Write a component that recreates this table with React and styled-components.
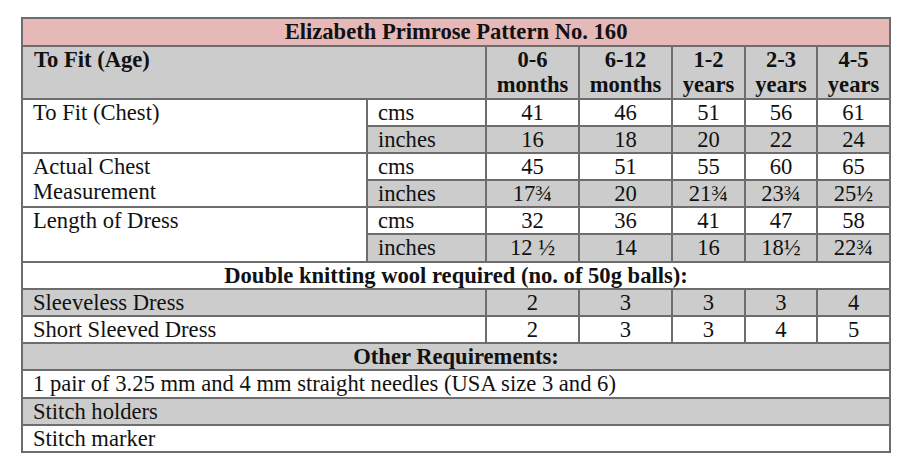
import React from 'react';
import styled, { createGlobalStyle } from 'styled-components';

const GlobalStyle = createGlobalStyle`
  html, body {
    margin: 0;
    padding: 0;
    background: #ffffff;
  }
  body {
    font-family: "Liberation Serif", "Times New Roman", serif;
    color: #111;
  }
`;

const Page = styled.div`
  padding: 17px 0 0 21px;
`;

const Table = styled.table`
  border-collapse: collapse;
  table-layout: fixed;
  width: 868px;
  font-size: 22.6px;
  line-height: 25px;
  border: 2px solid #6d6d6d;
  border-top: 1px solid #333;
`;

const Row = styled.tr`
  height: ${p => (p.$tall ? '53px' : '27.2px')};
  background: ${p => (p.$shade ? '#cccccc' : '#ffffff')};
`;

const TitleRow = styled.tr`
  height: 27.2px;
  background: #e6b8b7;
`;

const Cell = styled.td`
  border: 2px solid #6d6d6d;
  padding: 0 10px;
  vertical-align: top;
  text-align: ${p => (p.$center ? 'center' : 'left')};
  font-weight: ${p => (p.$bold ? 'bold' : 'normal')};
  background: ${p => (p.$shade ? '#cccccc' : 'transparent')};
  white-space: nowrap;
`;

const Head = styled.th`
  border: 2px solid #6d6d6d;
  padding: 0 4px;
  vertical-align: top;
  text-align: ${p => (p.$left ? 'left' : 'center')};
  padding-left: ${p => (p.$left ? '11px' : '4px')};
  font-weight: bold;
  font-size: 22.6px;
  line-height: 25.5px;
  white-space: nowrap;
`;

const ages = [
  ['0-6', 'months'],
  ['6-12', 'months'],
  ['1-2', 'years'],
  ['2-3', 'years'],
  ['4-5', 'years'],
];

const sizes = [
  { label: 'To Fit (Chest)', cms: ['41', '46', '51', '56', '61'], inches: ['16', '18', '20', '22', '24'] },
  { label: ['Actual Chest', 'Measurement'], cms: ['45', '51', '55', '60', '65'], inches: ['17¾', '20', '21¾', '23¾', '25½'] },
  { label: 'Length of Dress', cms: ['32', '36', '41', '47', '58'], inches: ['12 ½', '14', '16', '18½', '22¾'] },
];

const wool = [
  { label: 'Sleeveless Dress', values: ['2', '3', '3', '3', '4'], shade: true },
  { label: 'Short Sleeved Dress', values: ['2', '3', '3', '4', '5'], shade: false },
];

const other = [
  { label: '1 pair of 3.25 mm and 4 mm straight needles (USA size 3 and 6)', shade: false },
  { label: 'Stitch holders', shade: true },
  { label: 'Stitch marker', shade: false },
];

export default function App() {
  return (
    <Page>
      <GlobalStyle />
      <Table>
        <colgroup>
          <col style={{ width: 345 }} />
          <col style={{ width: 119 }} />
          <col style={{ width: 93 }} />
          <col style={{ width: 93 }} />
          <col style={{ width: 73 }} />
          <col style={{ width: 72 }} />
          <col style={{ width: 73 }} />
        </colgroup>
        <tbody>
          <TitleRow>
            <Head colSpan={7}>Elizabeth Primrose Pattern No. 160</Head>
          </TitleRow>
          <Row $shade $tall>
            <Head colSpan={2} $left>To Fit (Age)</Head>
            {ages.map(([a, b]) => (
              <Head key={a}>
                {a}
                <br />
                {b}
              </Head>
            ))}
          </Row>
          {sizes.map(s => (
            <React.Fragment key={String(s.label)}>
              <Row>
                <Cell rowSpan={2}>
                  {Array.isArray(s.label) ? (
                    <>
                      {s.label[0]}
                      <br />
                      {s.label[1]}
                    </>
                  ) : (
                    s.label
                  )}
                </Cell>
                <Cell>cms</Cell>
                {s.cms.map((v, i) => (
                  <Cell key={i} $center>{v}</Cell>
                ))}
              </Row>
              <Row>
                <Cell $shade>inches</Cell>
                {s.inches.map((v, i) => (
                  <Cell key={i} $center $shade>{v}</Cell>
                ))}
              </Row>
            </React.Fragment>
          ))}
          <Row>
            <Cell colSpan={7} $center $bold>Double knitting wool required (no. of 50g balls):</Cell>
          </Row>
          {wool.map(w => (
            <Row key={w.label} $shade={w.shade}>
              <Cell colSpan={2}>{w.label}</Cell>
              {w.values.map((v, i) => (
                <Cell key={i} $center>{v}</Cell>
              ))}
            </Row>
          ))}
          <Row $shade>
            <Cell colSpan={7} $center $bold>Other Requirements:</Cell>
          </Row>
          {other.map(o => (
            <Row key={o.label} $shade={o.shade}>
              <Cell colSpan={7}>{o.label}</Cell>
            </Row>
          ))}
        </tbody>
      </Table>
    </Page>
  );
}
